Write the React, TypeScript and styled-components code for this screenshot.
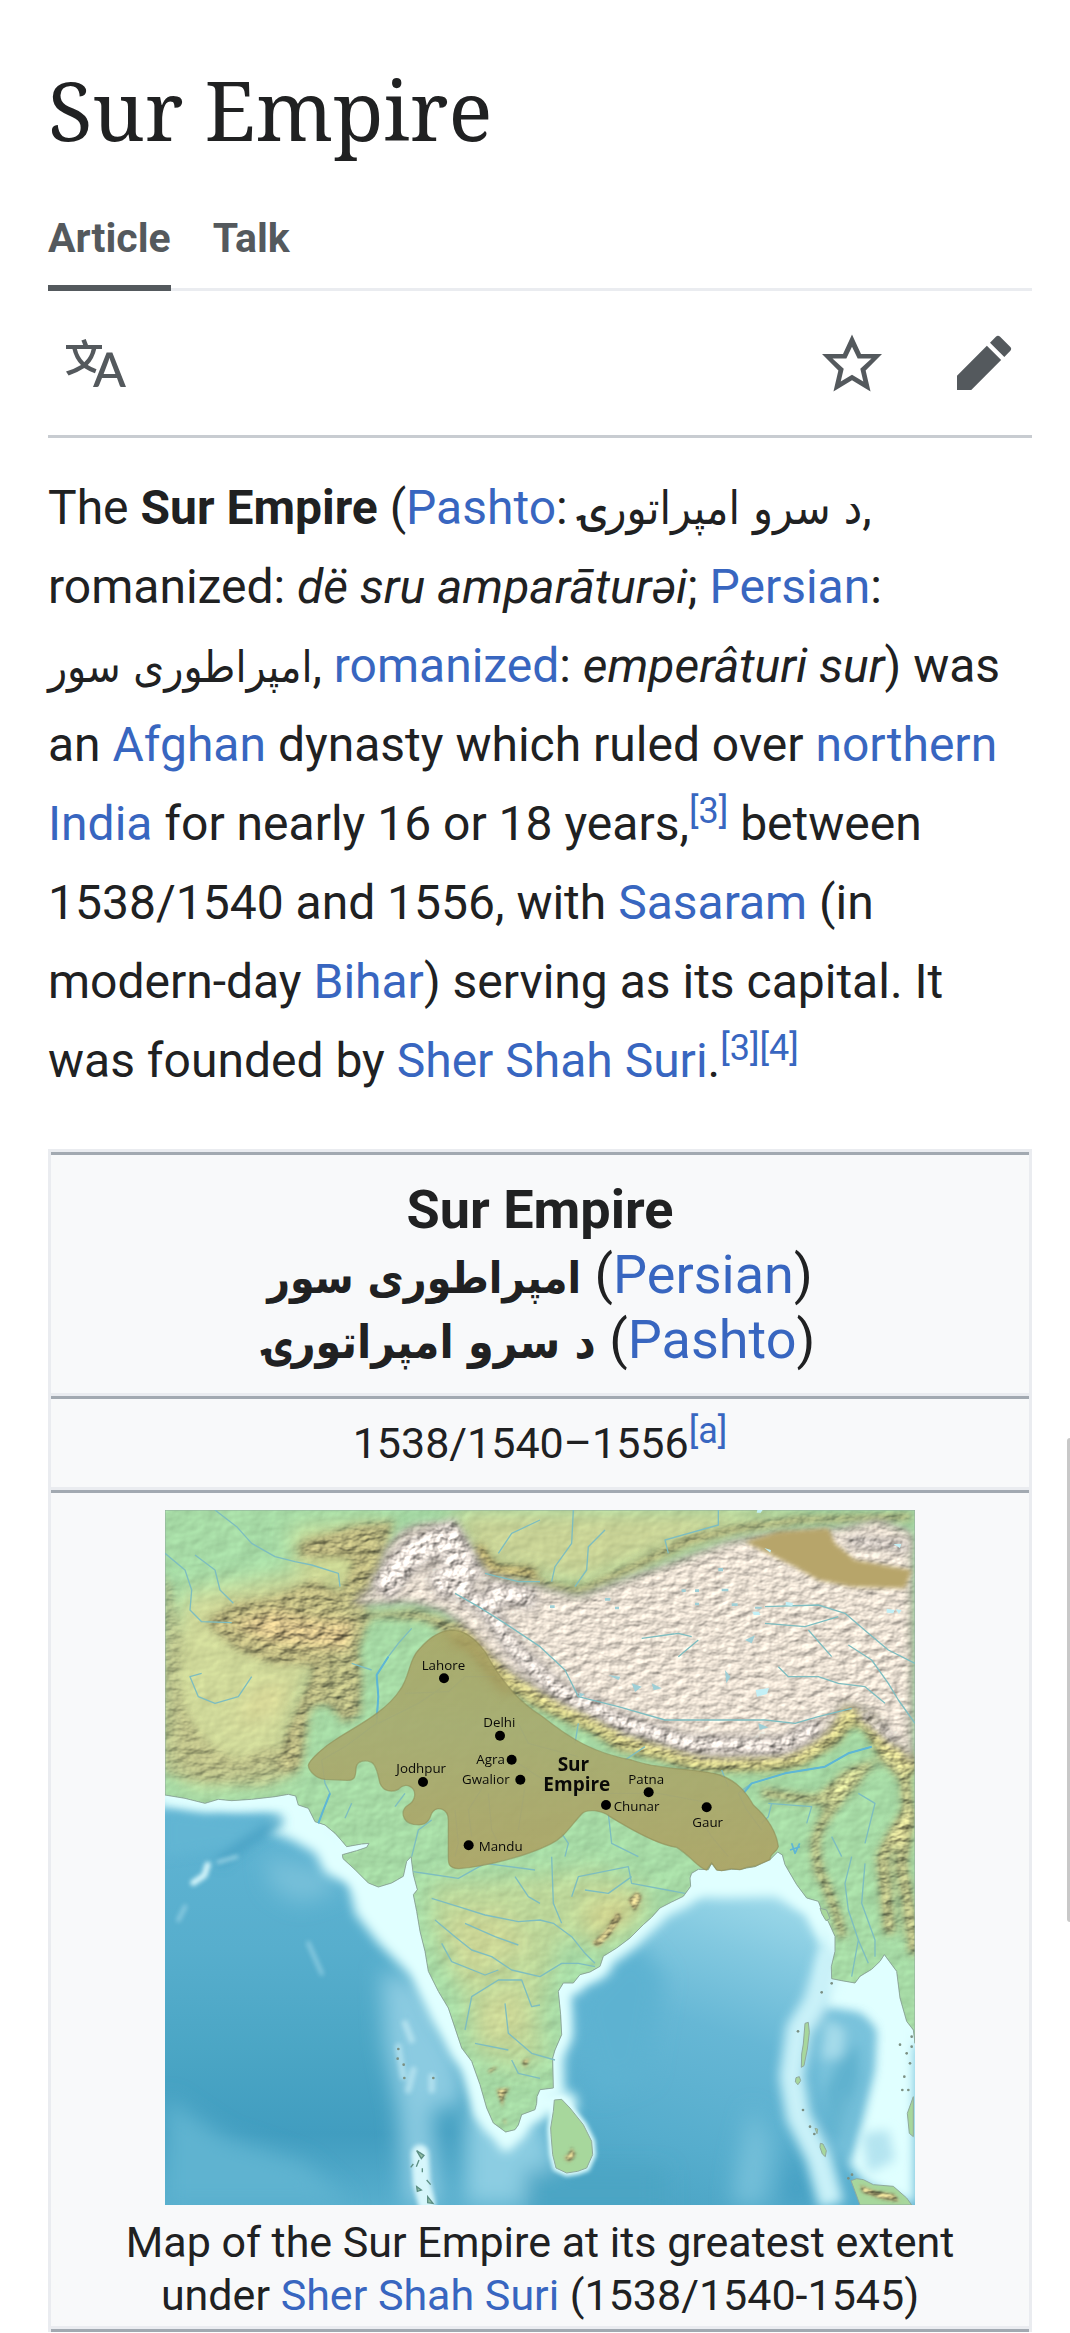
import React from "react";
import styled, { createGlobalStyle } from "styled-components";

const ink = "#202122";
const subtle = "#54595d";
const link = "#3866c0";
const hairline = "#eaecf0";
const rule = "#a2a9b1";
const sans = `Roboto, "Noto Sans", "DejaVu Sans", sans-serif`;
const serif = `"Noto Serif", "DejaVu Serif Condensed", "DejaVu Serif", serif`;

const GlobalStyle = createGlobalStyle`
  *, *::before, *::after { box-sizing: border-box; }
  body {
    margin: 0;
    background: #fff;
    color: ${ink};
    font-family: ${sans};
  }
`;

const Page = styled.main`
  padding: 57px 38px 0 48px;
`;

const Title = styled.h1`
  margin: 0;
  font-family: ${serif};
  font-weight: 400;
  font-size: 82px;
  line-height: 104px;
`;

const Tabs = styled.nav`
  display: flex;
  gap: 42px;
  margin-top: 43px;
  box-shadow: inset 0 -3px ${hairline};
`;

const Tab = styled.a<{ $active?: boolean }>`
  padding: 10px 0 23px;
  border-bottom: 6px solid ${(p) => (p.$active ? subtle : "transparent")};
  color: ${subtle};
  font-size: 41px;
  line-height: 48px;
  font-weight: 700;
  text-decoration: none;
`;

const Toolbar = styled.div`
  display: flex;
  align-items: center;
  gap: 36px;
  height: 147px;
  border-bottom: 3px solid #c8ccd1;
`;

const IconButton = styled.button<{ $push?: boolean }>`
  display: grid;
  place-items: center;
  width: 96px;
  height: 96px;
  padding: 0;
  margin-right: ${(p) => (p.$push ? "auto" : "0")};
  border: 0;
  background: none;
  color: ${subtle};
`;

const Lead = styled.p`
  margin: 30px 0 49px;
  font-size: 48px;
  line-height: 79px;
`;

const Link = styled.a`
  color: ${link};
  text-decoration: none;
`;

const Arabic = styled.span<{ $size: number }>`
  font-family: "DejaVu Sans Condensed", "DejaVu Sans", sans-serif;
  font-size: ${(p) => p.$size}px;
  line-height: 1;
`;

const Sup = styled.sup`
  font-size: 36px;
  line-height: 0;
  vertical-align: super;
`;

const Infobox = styled.table`
  width: 100%;
  border: 3px solid ${hairline};
  border-bottom: 0;
  border-spacing: 0;
  background: #f8f9fa;
  text-align: center;
`;

const HeadCell = styled.th`
  padding: 22px 12px 21px;
  border-top: 3px solid ${rule};
  border-bottom: 3px solid ${hairline};
  font-size: 54px;
  line-height: 65px;
`;

const Plain = styled.span`
  font-weight: 400;
`;

const Cell = styled.td<{ $pad: string }>`
  padding: ${(p) => p.$pad};
  border-top: 3px solid ${rule};
  border-bottom: 3px solid ${hairline};
  font-size: 43px;
  line-height: 53px;
`;

const NextRow = styled.td`
  padding: 0;
  border-top: 3px solid ${rule};
`;

const Figure = styled.figure`
  margin: 0;
`;

const MapSvg = styled.svg`
  display: block;
  width: 750px;
  max-width: 100%;
  height: auto;
  margin: 0 auto 11px;
`;

const ScrollThumb = styled.div`
  position: fixed;
  top: 1438px;
  right: 0;
  width: 3px;
  height: 484px;
  border-radius: 3px 0 0 3px;
  background: #c8c8c8;
`;

const LAND =
  "M0 0H2250V1600L2245 1560 2225 1534 2205 1464 2195 1384 2158 1334 2145 1354 2120 1378 2085 1399 2070 1419 2030 1412 2000 1406 1999 1370 2010 1324 2010 1279 1990 1235 1975 1214 1960 1174 1925 1164 1895 1124 1875 1090 1860 1064 1852 1035 1838 1026 1815 1049 1790 1060 1770 1070 1745 1074 1725 1079 1700 1078 1670 1082 1655 1080 1640 1059 1630 1079 1600 1078 1580 1090 1575 1104 1577 1129 1555 1159 1520 1176 1485 1194 1460 1222 1435 1244 1395 1284 1355 1314 1315 1339 1305 1369 1275 1386 1245 1394 1225 1419 1195 1419 1180 1444 1187 1514 1190 1574 1170 1620 1163 1644 1165 1734 1125 1739 1116 1760 1115 1780 1110 1799 1070 1814 1060 1845 1050 1859 1022 1866 985 1839 965 1794 945 1724 920 1654 890 1614 870 1554 850 1494 820 1444 790 1384 780 1324 765 1264 755 1204 745 1154 757 1139 745 1094 738 1040 725 1054 715 1099 680 1119 640 1131 610 1119 570 1079 534 1046 532 1034 575 1022 605 1012 612 1000 590 1002 545 1010 528 990 510 970 480 945 450 935 430 895 400 885 392 858 370 853 330 860 260 868 200 872 160 868 120 880 60 865 0 855Z";
const LANKA =
  "M1168 1770L1190 1768 1215 1794 1255 1844 1280 1894 1283 1934 1265 1974 1238 1984 1205 1989 1173 1974 1163 1934 1158 1874 1157 1854 1165 1804Z";
const SUMATRA =
  "M2058 2012L2075 2006 2095 2009 2125 2024 2185 2029 2225 2064 2240 2085H2085L2070 2044Z";
const ISLANDS =
  "M1920 1540l10-3 3 30-6 50-10 50-8 5 1-40 5-30ZM1893 1703l10-3 4 12-8 12-8-8ZM1966 1900l8 2 10 20-3 18-9-8-7-20ZM1950 1855l8 2-2 14ZM2245 1760v120l-12-10-6-60ZM1965 1195l20 5 10 26-12 6-12-20Z";
const PLATEAU =
  "M700 60C760 20 850 20 890 60C930 100 940 160 985 190L1125 220L1240 250L1330 215L1530 145L1690 85L1830 60L2030 45L2140 20L2250 60V780L2210 730L2165 690L2120 620L2040 590L2000 665L1900 730L1810 745L1690 750L1600 745L1500 700L1375 675L1300 625L1210 590L1125 550L1040 500L960 430L900 360L830 310L740 285L600 290L545 285L630 210L650 120Z";
const WEST =
  "M400 90L560 40L700 20L650 190L600 300L760 290L880 330L930 420L860 400L780 340L620 330L590 420L600 500L595 620L540 650L480 590L440 600L420 760L400 800L340 780L350 680L400 560L440 470L330 470L220 430L130 360L120 320L210 270L330 250L450 200L520 240L560 150L390 150Z";
const SIND =
  "M-20 170L30 220L60 400L50 500L70 600L130 690L210 740L330 700L380 800L300 840L60 820L-20 790Z";
const HIMALAYA_SLOPE =
  "M880 340L960 430L1040 510L1125 560L1210 600L1300 640L1375 690L1500 720L1600 750L1700 750L1810 750L1900 735L2000 670L2050 600L2120 630L2160 700L2200 740L2250 790";
const BURMA_HILLS =
  "M1780 845L1870 860L1960 870L2050 790L2130 760M2090 790C2020 870 1960 930 1950 1000L1960 1080L1985 1130L2020 1230L2035 1290";
const SHAN_HILLS = "M2150 730L2220 800L2230 900L2180 980L2150 1040L2160 1130L2175 1280M2240 900L2210 1060L2230 1180L2250 1340";
const DECCAN =
  "M800 1120L1000 1110L1300 1080L1400 1120L1440 1180L1330 1230L1280 1300L1190 1280L1150 1400L1120 1530L1140 1640L1060 1680L960 1640L920 1570L910 1480L830 1330L800 1230Z";
const MAINLAND_GHATS = [
  "M965 1680l30-15 5 10-30 20Z",
  "M990 1735l50-5-20 30-5 40-10-20Z",
  "M1008 1830l14-8 6 30Z",
  "M1065 1650l35-10-20 40Z",
  "M1275 1300l45-40 35-60 20 20-40 60-35 35Z",
  "M1385 1170l30-30 20 20-25 50Z",
];
const ISLAND_PEAKS = [
  "M1210 1930l10-25 15 30-20 25-25-15Z",
  "M2080 2020l50 20 60 10 20 30-60-10-60-20Z",
];
const EMPIRE =
  "M430 766C432 750 480 708 510 690C560 655 660 610 705 540C735 500 730 450 765 415C800 375 830 362 860 360C900 360 930 385 960 425C1000 500 1050 570 1130 618C1220 690 1290 730 1400 750C1480 780 1590 775 1665 795C1720 815 1745 850 1765 885C1815 930 1835 970 1840 1010C1835 1028 1815 1030 1815 1049L1790 1060 1770 1068 1745 1072 1725 1079 1700 1076 1670 1082 1655 1080 1640 1059 1625 1080C1600 1075 1580 1040 1535 1012C1480 1005 1400 960 1335 920C1310 900 1265 895 1250 912C1215 950 1195 985 1155 1003C1080 1040 960 1070 880 1076C850 1074 850 1060 850 1040L850 930C850 895 815 885 800 910C788 948 770 946 745 943C710 935 705 900 730 885C755 870 750 845 745 838C730 820 712 825 700 838C680 848 655 845 645 820C640 800 635 765 620 757C600 748 575 752 573 775C572 800 570 812 545 811L480 808C455 806 432 785 430 766Z";

const RIVERS = [
  "M0 130L60 180 80 240 75 300 110 335 200 338M90 135L150 180 165 240 205 280M150 0L215 50 260 100 330 140 390 155 440 165 520 190 525 230",
  "M740 355L700 400 670 440 635 495 640 560 635 640 540 710 470 750 480 820 495 850 475 900 460 940",
  "M260 500L220 560 150 580 100 560 75 500 110 490M560 460L620 480",
  "M1225 0L1220 100 1170 170 1160 215M1320 60L1270 110 1265 180 1230 230M1125 30L1040 70 1000 130M1660 0L1660 45 1500 90 1510 130",
  "M960 190L1060 215 1125 215M870 250L940 290 1020 340 1080 380 1125 410 1200 480 1240 560 1360 590 1500 630 1640 630 1800 630 1890 640 1960 620 2060 595",
  "M1800 290L1960 285 2040 310 2110 370 2170 420 2250 460M1800 340L1920 350 2020 320M1930 360L2000 440M2050 405L2120 450 2170 520 2200 570 2250 640",
  "M1840 470L1870 500 1960 500 2020 520 2100 530 2160 580M1430 385L1540 370 1580 380M1540 440L1600 390",
  "M2120 710L2050 730 1980 770 1860 790 1760 820 1720 850 1745 900 1790 960M1820 880L1810 920 1790 940M1810 880L1940 890 1925 940",
  "M1230 700L1240 640M1380 750L1440 710M1670 780L1690 830",
  "M720 550L850 545 900 500 990 500M640 640L760 580 850 520M1060 640L1090 700 1125 710 1240 740M970 750L1060 760 1120 800 1220 850 1320 850 1480 850 1640 880",
  "M960 820L910 900 920 980M970 850L980 960 1010 1020M870 900L880 1000 870 1040M1080 830L1060 960M1330 910L1340 1000 1420 1040M1600 920L1640 980 1690 1040",
  "M745 1085L880 1105 960 1060 1110 1080M800 1165L880 1190 960 1215 1060 1235 1125 1230 1165 1240 1220 1280 1260 1330 1290 1360",
  "M810 1230L870 1280 920 1320 980 1340 1040 1380 1125 1400 1190 1360 1240 1360 1290 1370M830 1300L860 1355 960 1395 1000 1380M900 1240L990 1280 1060 1305M1050 1100L1090 1160 1125 1180",
  "M900 1560L920 1460 1000 1410 1070 1410 1100 1490 1125 1485M1020 1480L1030 1570 1100 1630 1170 1650M1040 1650L1060 1690 1125 1705M930 1600L1030 1620",
  "M1160 1040L1165 1180 1190 1240M1220 1160L1240 1100 1390 1070 1400 1120 1560 1150M1260 1140L1330 1150 1400 1100",
  "M2060 1040L2040 1120 2050 1200 2080 1290 2060 1400M2080 1290L2110 1360M2100 1060L2090 1180 2130 1290 2130 1340M2000 980L2030 1040M2080 850L2130 880 2100 1000",
  "M690 890L720 850M740 1040L760 960 800 930M540 925L560 880M1200 1040L1210 1000 1190 970",
];

const ISLETS = [
  [2205, 1604], [2225, 1630], [2218, 1700], [2235, 1660], [2212, 1740], [2240, 1610], [2230, 1740],
  [1899, 1564], [1914, 1800], [1935, 1850], [1948, 1872], [2050, 2005], [2061, 1994], [700, 1617],
  [698, 1646], [716, 1664], [718, 1704], [805, 1704], [2000, 1420], [1970, 1447], [2240, 1580],
];

const CITIES = [
  { name: "Lahore", dot: [837, 505], text: [770, 479] },
  { name: "Delhi", dot: [1005, 677], text: [955, 652] },
  { name: "Agra", dot: [1040, 749], text: [934, 761] },
  { name: "Gwalior", dot: [1066, 809], text: [891, 822] },
  { name: "Jodhpur", dot: [774, 816], text: [694, 789] },
  { name: "Mandu", dot: [911, 1006], text: [941, 1022] },
  { name: "Patna", dot: [1451, 847], text: [1390, 823] },
  { name: "Chunar", dot: [1323, 885], text: [1346, 902] },
  { name: "Gaur", dot: [1625, 892], text: [1582, 952] },
];

const Label = styled.text<{ $bold?: boolean }>`
  font-family: "Open Sans", "Noto Sans", sans-serif;
  font-size: ${(p) => (p.$bold ? 57 : 40)}px;
  font-weight: ${(p) => (p.$bold ? 700 : 500)};
  fill: #0a0a08;
`;

function Relief({ id, scale, freq, gain, seed }: { id: string; scale: number; freq: string; gain: number; seed: number }) {
  return (
    <filter id={id} x="0" y="0" width="2250" height="2085" filterUnits="userSpaceOnUse" colorInterpolationFilters="sRGB">
      <feTurbulence type="fractalNoise" baseFrequency={freq} numOctaves="3" seed={seed} result="noise" />
      <feColorMatrix in="noise" type="matrix" values="0 0 0 0 0  0 0 0 0 0  0 0 0 0 0  1 0 0 0 0" result="height" />
      <feDiffuseLighting in="height" surfaceScale={scale} diffuseConstant="1" lightingColor="#fff" result="light">
        <feDistantLight azimuth="225" elevation="52" />
      </feDiffuseLighting>
      <feComposite in="SourceGraphic" in2="light" operator="arithmetic" k1={gain} result="lit" />
      <feComposite in="lit" in2="SourceAlpha" operator="in" />
    </filter>
  );
}

function EmpireMap() {
  return (
    <MapSvg viewBox="0 0 2250 2085" role="img" aria-label="Map of the Sur Empire">
      <defs>
        <linearGradient id="west" x1="0" y1="900" x2="0" y2="2085" gradientUnits="userSpaceOnUse">
          <stop offset="0" stopColor="#60b4d3" />
          <stop offset="0.35" stopColor="#57aecd" />
          <stop offset="0.6" stopColor="#4ba6c5" />
          <stop offset="0.82" stopColor="#419dc0" />
          <stop offset="1" stopColor="#57aecd" />
        </linearGradient>
        <linearGradient id="bay" x1="1780" y1="1120" x2="1450" y2="2085" gradientUnits="userSpaceOnUse">
          <stop offset="0" stopColor="#9fdaea" />
          <stop offset="0.2" stopColor="#83c9e0" />
          <stop offset="0.45" stopColor="#66b7d5" />
          <stop offset="0.8" stopColor="#56adcd" />
          <stop offset="1" stopColor="#4ca5c5" />
        </linearGradient>
        <linearGradient id="realm" x1="0" y1="360" x2="0" y2="1080" gradientUnits="userSpaceOnUse">
          <stop offset="0" stopColor="#a8a566" />
          <stop offset="0.4" stopColor="#a7a96e" />
          <stop offset="1" stopColor="#ada264" />
        </linearGradient>
        <filter id="soft" x="-20%" y="-20%" width="140%" height="140%"><feGaussianBlur stdDeviation="16" /></filter>
        <filter id="softer" x="-40%" y="-40%" width="180%" height="180%"><feGaussianBlur stdDeviation="32" /></filter>
        <filter id="edge" x="-20%" y="-20%" width="140%" height="140%"><feGaussianBlur stdDeviation="7" /></filter>
        <Relief id="gentle" scale={2} freq="0.014 0.018" gain={1.27} seed={4} />
        <Relief id="hills" scale={8} freq="0.022 0.04" gain={1.29} seed={8} />
        <Relief id="snow" scale={4} freq="0.026 0.044" gain={1.28} seed={15} />
        <Relief id="peaks" scale={9} freq="0.026 0.032" gain={1.29} seed={21} />
        <clipPath id="land"><path d={LAND} /></clipPath>
        <clipPath id="frame"><rect width="2250" height="2085" /></clipPath>
      </defs>

      <g clipPath="url(#frame)">
        <rect width="2250" height="2085" fill="url(#west)" />
        <path d="M1080 1000H2250V2085H1090Z" fill="url(#bay)" />

        <g filter="url(#softer)">
          <path d="M900 1800L1120 1800 1180 1990 1120 2085H900Z" fill="#8ccde2" />
          <path d="M650 1380L760 1420 880 1640 900 1780 800 1800 830 2085H720L700 1800 660 1600Z" fill="#8bcbe1" />
          <path d="M0 1760L180 1880 420 1960 560 2085H0Z" fill="#5fb3d0" />
          <path d="M300 1040L480 1080 520 1140 400 1180 320 1130Z" fill="#77c0d9" />
          <path d="M1760 1790L1820 1900 1800 2085H1700L1720 1950Z" fill="#74bfd9" />
          <path d="M1880 1880L1950 2085H1850Z" fill="#459fc2" />
          <path d="M1080 1980H1500V2120H1080Z" fill="#4ba5c4" />
          <path d="M1220 1480L1400 1280 1500 1400 1450 1700 1300 1760Z" fill="#5db2d1" />
        </g>

        <path d={LAND} fill="none" stroke="#e0ffff" strokeWidth="66" filter="url(#soft)" />
        <path d={LANKA} fill="#e0ffff" stroke="#e0ffff" strokeWidth="20" filter="url(#edge)" />
        <g filter="url(#soft)" fill="#e0ffff">
          <path d="M0 840H400L420 900 360 920 300 900 80 905 0 890Z" />
          <path d="M370 900L300 960 380 990 450 1030 480 1090 550 1120 570 1210 640 1300 740 1400 800 1530 900 1680 930 1820 985 1860 1010 1925 1040 1920 1080 1840 1120 1820V1740H1000L760 1140 745 1040H600L420 880Z" />
          <path d="M1560 1160L1680 1165 1830 1160 1920 1210 1960 1290 1990 1330V1180L1860 1040H1600Z" />
          <path d="M1165 1640L1200 1580 1205 1440 1300 1390 1330 1300 1180 1400Z" />
          <path d="M1110 1740L1230 1750 1240 1800 1160 1820 1110 1800Z" />
          <path d="M1980 1390L1970 1490 2080 1510 2130 1560 2125 1680 2080 1860 2050 1960 2100 2020 2250 2085V1340H2150Z" />
        </g>
        <g filter="url(#soft)">
          <path d="M2000 1320L1950 1480 1900 1560 1880 1700 1900 1820 1960 1940 2000 2085" fill="none" stroke="#c9f1f8" strokeWidth="75" />
          <path d="M1970 1510L2090 1520 2125 1560 2115 1680 2070 1860 2040 1960 1990 1860 1960 1740 1950 1600Z" fill="#79c2db" />
          <path d="M1985 1530L2040 1560 2030 1640 1970 1650ZM2040 1740L2055 1780 2030 1880 2010 1860Z" fill="#a5dbea" />
          <path d="M1980 1740L2020 1660 2080 1600 2085 1700 2030 1900 1990 1860Z" fill="#55abcb" opacity="0.7" />
          <path d="M2090 1870L2170 1860 2190 1950 2110 1990Z" fill="#b4e4f0" />
          <path d="M0 900L300 935 350 930 200 1010 0 1040Z" fill="#62b5d3" />
          <path d="M350 930L240 1000 160 1060" fill="none" stroke="#459fc2" strokeWidth="26" />
        </g>
        <g filter="url(#edge)" fill="none" stroke="#d6f6fb" strokeLinecap="round">
          <path d="M215 1040L160 1056" strokeWidth="10" opacity="0.6" />
          <path d="M128 1064L118 1096M112 1100L85 1118" strokeWidth="18" />
          <path d="M60 1190L40 1230M430 1300L470 1390" strokeWidth="14" opacity="0.35" />
          <path d="M700 1610L715 1700M745 1680L730 1740M720 1540L740 1590M800 1700V1740" strokeWidth="20" opacity="0.5" />
          <path d="M765 1930L770 2020 785 2080" strokeWidth="52" />
        </g>
        <path d="M755 1922l22 14-8 10ZM762 1950l-8 20M772 1975v12M755 2030l14 10-12 4ZM785 2010l12 14M788 2060l16 20-16-2ZM745 1962l-8 10" fill="#93bfa5" stroke="#5d8f84" strokeWidth="4" />

        <path d={LAND} fill="#a6dba6" />
        <g clipPath="url(#land)">
          <g filter="url(#gentle)">
            <path d={LAND} fill="#a6daa5" />
            <g filter="url(#softer)">
              <path d="M900 0H1980L1700 60 1240 230 960 170 850 40Z" fill="#c8d295" />
              <path d="M60 250L460 180 560 300 420 560 360 800 100 830 0 760V420Z" fill="#cfd899" />
              <path d="M380 60L660 40 640 240 500 260 400 180Z" fill="#cad694" />
              <path d={DECCAN} fill="#bdd79a" />
              <path d="M830 1220L1000 1200 1100 1300 900 1420ZM930 1480L1060 1420 1100 1560 940 1620Z" fill="#cbd696" />
              <path d="M1250 1180L1440 1140 1420 1230 1290 1310Z" fill="#cfd38f" />
              <path d="M280 540L390 520 330 600 200 650Z" fill="#dcd998" />
            </g>
          </g>
          <g filter="url(#hills)">
            <g filter="url(#soft)">
              <path d={WEST} fill="#d4ca8c" opacity="0.85" />
              <path d={SIND} fill="#d8d698" opacity="0.65" />
              <path d={HIMALAYA_SLOPE} fill="none" stroke="#cfc986" strokeWidth="84" />
              <path d={BURMA_HILLS} fill="none" stroke="#d2d594" strokeWidth="40" />
              <path d={SHAN_HILLS} fill="none" stroke="#d4d292" strokeWidth="46" />
              <path d="M1100 215L1240 245 1420 165 1560 95 1700 60 1900 30 2250 20" fill="none" stroke="#cbc182" strokeWidth="32" />
              <path d="M200 340L330 300 460 330 570 330 550 420 440 410 300 395Z" fill="#cdb984" />
              <path d="M930 100L980 180 1120 190" fill="none" stroke="#c9ba78" strokeWidth="50" />
            </g>
            <g filter="url(#edge)" fill="#d6c98b">
              {MAINLAND_GHATS.map((d) => <path key={d} d={d} />)}
            </g>
          </g>
          <g filter="url(#snow)">
            <path d={PLATEAU} fill="#e6dccf" filter="url(#soft)" />
          </g>
          <g filter="url(#peaks)">
            <g filter="url(#soft)" fill="none" stroke="#efe6df">
              <path d="M640 250L740 130 850 80 900 180 800 240" strokeWidth="100" />
              <path d="M860 230L960 290 1060 430 1180 540 1380 640 1560 700 1850 710 1970 640" strokeWidth="66" />
              <path d="M960 240L1120 270" strokeWidth="80" />
              <path d="M2040 90L2240 110M2080 600L2200 700" strokeWidth="44" />
            </g>
          </g>
          <path d="M1740 95L1840 65 1990 55 2010 100 2070 150 2240 180 2220 235 2060 230 1960 210 1880 165Z" fill="#b7a56a" filter="url(#edge)" />
        </g>

        <path d={LAND} fill="none" stroke="#8fa99c" strokeWidth="3" />
        <g fill="#a7d79c" stroke="#8fa99c" strokeWidth="3">
          <path d={LANKA} />
          <path d={SUMATRA} />
          <path d={ISLANDS} />
        </g>
        <g filter="url(#hills)">
          <g filter="url(#edge)" fill="#d6c98b">
            {ISLAND_PEAKS.map((d) => <path key={d} d={d} />)}
          </g>
        </g>
        <g fill="#7b8f82">
          {ISLETS.map(([x, y]) => <circle key={`${x}-${y}`} cx={x} cy={y} r="4" />)}
        </g>

        <g fill="none" stroke="#7dbdc0" strokeWidth="4" strokeLinejoin="round">
          {RIVERS.map((d) => <path key={d} d={d} />)}
        </g>
        <g fill="none" stroke="#5db6d6" strokeWidth="6" strokeLinejoin="round">
          <path d="M670 440L635 495 640 560 635 625M495 850L475 900 460 940M2120 710L2050 730 1980 770 1860 790 1760 820 1735 850" />
          <path d="M1880 1000l10 30 14-30M1875 1020l30-10" strokeWidth="5" />
        </g>
        <g fill="#c3f0f6">
          <path d="M1772 540l40-6-6 18-30 8ZM2165 296l24 4-4 10-20-2ZM2192 298l18 2-8 12ZM2185 102l24 0-4 12ZM1798 114l20 6-2 8ZM1777 0h16l-6 8h-12ZM1762 305l20 0 4 10-20 0ZM1862 275l22 4-2 10-20-4Z" />
        </g>
        <g fill="#9fcfd6">
          <path d="M1780 640l30 12-26 8ZM1550 238h12v8h-12ZM1590 238h12v8h-12ZM1670 236h20v8h-20ZM1590 278h12v8h-12ZM1700 280h18v8h-18ZM1155 286h14v8h-14ZM1320 264h16v8h-16ZM1350 290h12v8h-12ZM1740 390l30-14-10 24ZM1400 520l30 10-20 16ZM1240 548l20 4-14 10ZM1770 290h20v6h-20ZM1660 174h14v10h-14ZM1330 495l36 5-6 10ZM1460 520l30 15-24 6ZM1680 480l16 20-12 20Z" />
        </g>

        <path d={EMPIRE} fill="url(#realm)" fillOpacity="0.9" stroke="#8f8d58" strokeOpacity="0.6" strokeWidth="4" />
        <path d="M860 390L930 410 980 490 1030 550" fill="none" stroke="#a08a4e" strokeWidth="30" opacity="0.4" filter="url(#soft)" />

        {CITIES.map((c) => (
          <g key={c.name}>
            <circle cx={c.dot[0]} cy={c.dot[1]} r="15" fill="#000" />
            <Label x={c.text[0]} y={c.text[1]}>{c.name}</Label>
          </g>
        ))}
        <Label $bold x="1178" y="784">Sur</Label>
        <Label $bold x="1135" y="843">Empire</Label>
      </g>
    </MapSvg>
  );
}

const Icon = ({ d }: { d: string }) => (
  <svg width="60" height="60" viewBox="0 0 20 20" fill="currentColor" aria-hidden="true">
    <path d={d} />
  </svg>
);

const LANGUAGE =
  "M20 18h-1.44a.6.6 0 0 1-.4-.12.8.8 0 0 1-.23-.31L17 15h-5l-1 2.54a.8.8 0 0 1-.22.3.6.6 0 0 1-.4.14H9l4.55-11.47h1.89zm-3.53-4.31L14.89 9.5a12 12 0 0 1-.39-1.24q-.09.37-.19.69l-.19.56-1.58 4.19zm-6.3-1.58a13.4 13.4 0 0 1-2.91-1.41 11.46 11.46 0 0 0 2.81-5.37H12V4H7.31a4 4 0 0 0-.2-.56C6.87 2.79 6.6 2 6.6 2l-1.47.5s.4.89.6 1.5H0v1.33h2.15A11.23 11.23 0 0 0 5 10.7a17.2 17.2 0 0 1-5 2.1q.56.82.87 1.38a23.3 23.3 0 0 0 5.22-2.51 15.6 15.6 0 0 0 3.56 1.77zM3.63 5.33h4.91a8.1 8.1 0 0 1-2.45 4.45 9.1 9.1 0 0 1-2.46-4.45";
const STAR =
  "M20 7h-7L10 .5 7 7H0l5.46 5.47-1.64 7 6.18-3.7 6.18 3.73-1.63-7zm-10 6.9-3.76 2.27 1-4.28L3.5 8.5h4.61L10 4.6l1.9 3.9h4.6l-3.73 3.4 1 4.28z";
const PENCIL =
  "m16.77 8 1.94-2a1 1 0 0 0 0-1.41l-3.34-3.3a1 1 0 0 0-1.41 0L12 3.23zM1 14.25V19h4.75l9.96-9.96-4.75-4.75z";

export default function App() {
  return (
    <>
      <GlobalStyle />
      <Page>
        <Title>Sur Empire</Title>
        <Tabs aria-label="Namespaces">
          <Tab href="#article" $active aria-current="page">Article</Tab>
          <Tab href="#talk">Talk</Tab>
        </Tabs>
        <Toolbar>
          <IconButton type="button" aria-label="Language" $push><Icon d={LANGUAGE} /></IconButton>
          <IconButton type="button" aria-label="Watch"><Icon d={STAR} /></IconButton>
          <IconButton type="button" aria-label="Edit"><Icon d={PENCIL} /></IconButton>
        </Toolbar>

        <Lead>
          The <b>Sur Empire</b> (<Link href="#pashto">Pashto</Link>:{" "}
          <Arabic $size={46} lang="ps" dir="rtl">د سرو امپراتورۍ</Arabic>, romanized:{" "}
          <i>dë sru amparāturəi</i>; <Link href="#persian">Persian</Link>:{" "}
          <Arabic $size={44} lang="fa" dir="rtl">امپراطوری سور</Arabic>,{" "}
          <Link href="#romanized">romanized</Link>: <i>emperâturi sur</i>) was an{" "}
          <Link href="#afghan">Afghan</Link> dynasty which ruled over{" "}
          <Link href="#northern-india">northern India</Link> for nearly 16 or 18 years,
          <Sup><Link href="#note-3">[3]</Link></Sup> between 1538/1540 and 1556, with{" "}
          <Link href="#sasaram">Sasaram</Link> (in modern-day <Link href="#bihar">Bihar</Link>) serving as its
          capital. It was founded by <Link href="#suri">Sher Shah Suri</Link>.
          <Sup><Link href="#note-3">[3]</Link><Link href="#note-4">[4]</Link></Sup>
        </Lead>

        <Infobox>
          <tbody>
            <tr>
              <HeadCell scope="col">
                <div>Sur Empire</div>
                <div>
                  <Arabic $size={44} lang="fa" dir="rtl">امپراطوری سور</Arabic>{" "}
                  <Plain>(<Link href="#persian">Persian</Link>)</Plain>
                </div>
                <div>
                  <Arabic $size={46} lang="ps" dir="rtl">د سرو امپراتورۍ</Arabic>{" "}
                  <Plain>(<Link href="#pashto">Pashto</Link>)</Plain>
                </div>
              </HeadCell>
            </tr>
            <tr>
              <Cell $pad="18px 12px 17px">
                1538/1540–1556<Sup><Link href="#note-a">[a]</Link></Sup>
              </Cell>
            </tr>
            <tr>
              <Cell $pad="17px 48px 4px">
                <Figure>
                  <EmpireMap />
                  <figcaption>
                    Map of the Sur Empire at its greatest extent under{" "}
                    <Link href="#suri">Sher Shah Suri</Link> (1538/1540-1545)
                  </figcaption>
                </Figure>
              </Cell>
            </tr>
            <tr>
              <NextRow />
            </tr>
          </tbody>
        </Infobox>
      </Page>
      <ScrollThumb aria-hidden="true" />
    </>
  );
}
